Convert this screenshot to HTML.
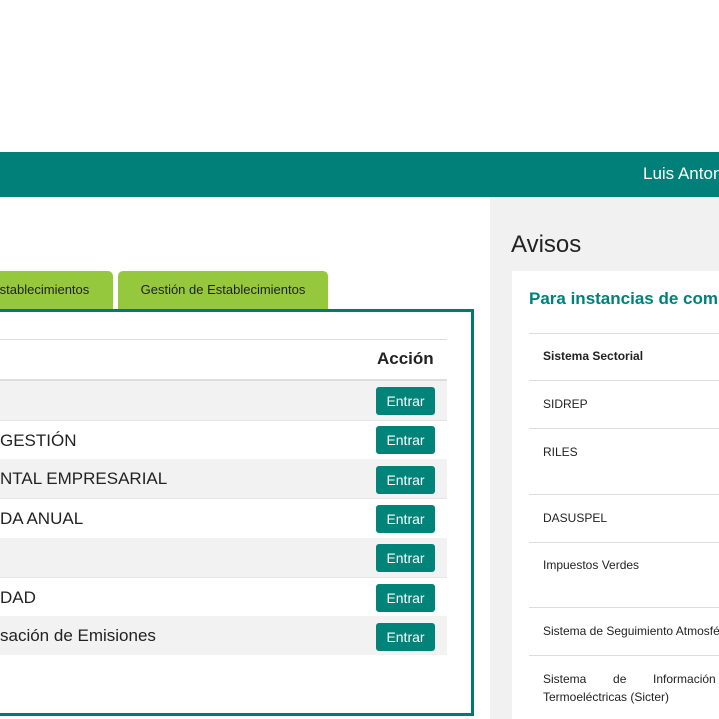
<!DOCTYPE html>
<html><head><meta charset="utf-8"><style>
*{margin:0;padding:0;box-sizing:border-box}
html,body{width:719px;height:719px;overflow:hidden}
body{background:#fff;font-family:"Liberation Sans",sans-serif;position:relative;color:#222}
.a{position:absolute}
.hdr{left:0;top:152px;width:719px;height:45px;background:#008079}
.user{left:643px;top:164px;width:76px;overflow:hidden;color:#fff;font-size:17px;white-space:nowrap}
.gray{left:490px;top:197px;width:229px;height:522px;background:#f1f1f1}
.card{left:512px;top:271px;width:207px;height:448px;background:#fff}
.tab{top:271px;height:38px;background:#95c83d;border-radius:5px 5px 0 0;font-size:13px;color:#222;line-height:38px;white-space:nowrap;overflow:hidden}
.box{left:0;top:309px;width:474px;height:407px;border:3px solid #00796f;border-left:none;background:#fff}
.row{left:0;width:447px;height:39px;font-size:17px;line-height:39px;white-space:nowrap;overflow:hidden}
.btn{left:376px;width:59px;height:28px;background:#00847a;border-radius:3px;color:#fff;font-size:14px;text-align:center;line-height:28px}
.line{height:1px;background:#ddd}
.rt{left:543px;width:176px;overflow:hidden;font-size:12px;white-space:nowrap;color:#222}
.clip{left:512px;width:207px;overflow:hidden;white-space:nowrap}
</style></head><body>
<div class="a hdr"></div>
<div class="a user">Luis Antonio</div>
<div class="a gray"></div>
<div class="a" style="left:511px;top:231px;font-size:24px;color:#222">Avisos</div>
<div class="a card"></div>
<div class="a" style="left:529px;top:289px;width:190px;overflow:hidden;font-size:17px;font-weight:bold;color:#00807a;white-space:nowrap">Para instancias de comunicación</div>
<div class="a line" style="left:529px;top:333px;width:190px"></div>
<div class="a rt" style="top:349px;font-weight:bold">Sistema Sectorial</div>
<div class="a line" style="left:529px;top:380px;width:190px"></div>
<div class="a rt" style="top:397px">SIDREP</div>
<div class="a line" style="left:529px;top:428px;width:190px"></div>
<div class="a rt" style="top:445px">RILES</div>
<div class="a line" style="left:529px;top:494px;width:190px"></div>
<div class="a rt" style="top:511px">DASUSPEL</div>
<div class="a line" style="left:529px;top:542px;width:190px"></div>
<div class="a rt" style="top:558px">Impuestos Verdes</div>
<div class="a line" style="left:529px;top:607px;width:190px"></div>
<div class="a rt" style="top:624px">Sistema de Seguimiento Atmosférico</div>
<div class="a line" style="left:529px;top:655px;width:190px"></div>
<div class="a rt" style="top:672px">Sistema &nbsp; &nbsp; &nbsp; &nbsp;de &nbsp; &nbsp; &nbsp; &nbsp;Información</div>
<div class="a rt" style="top:690px">Termoeléctricas (Sicter)</div>

<div class="a tab" style="left:0;width:113px;text-indent:-9px;border-top-left-radius:0">Establecimientos</div>
<div class="a tab" style="left:118px;width:210px;text-align:center">Gestión de Establecimientos</div>
<div class="a box"></div>
<div class="a line" style="left:0;top:339px;width:447px"></div>
<div class="a" style="left:377px;top:349px;font-size:17px;font-weight:bold">Acción</div>
<div class="a" style="left:0;top:379px;width:447px;height:2px;background:#ddd"></div>
<div class="a row" style="top:381px;background:#f2f2f2"></div>
<div class="a row" style="top:420px;border-top:1px solid #e6e6e6">GESTIÓN</div>
<div class="a row" style="top:459px;background:#f2f2f2">NTAL EMPRESARIAL</div>
<div class="a row" style="top:498px;border-top:1px solid #e6e6e6">DA ANUAL</div>
<div class="a row" style="top:538px;background:#f2f2f2"></div>
<div class="a row" style="top:577px;border-top:1px solid #e6e6e6">DAD</div>
<div class="a row" style="top:616px;background:#f2f2f2">sación de Emisiones</div>
<div class="a btn" style="top:387px">Entrar</div>
<div class="a btn" style="top:426px">Entrar</div>
<div class="a btn" style="top:466px">Entrar</div>
<div class="a btn" style="top:505px">Entrar</div>
<div class="a btn" style="top:544px">Entrar</div>
<div class="a btn" style="top:584px">Entrar</div>
<div class="a btn" style="top:623px">Entrar</div>
</body></html>
